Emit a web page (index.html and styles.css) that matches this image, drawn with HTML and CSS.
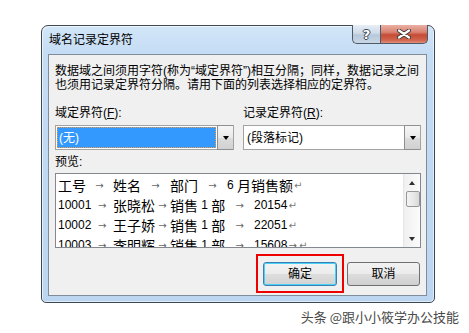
FILE: index.html
```html
<!DOCTYPE html>
<html lang="zh-CN">
<head>
<meta charset="utf-8">
<title>域名记录定界符</title>
<link rel="stylesheet" href="styles.css">
</head>
<body>
<div class="stage">
  <div class="window">
    <div class="titlebar">
      <span class="title">域名记录定界符</span>
      <div class="caption">
        <span class="cbtn help">?</span>
        <span class="cbtn close"><svg width="16" height="10" viewBox="0 0 16 10"><path d="M3 1.5 L13 8.5 M13 1.5 L3 8.5" stroke="#3a3a3a" stroke-width="4" stroke-linecap="round"/><path d="M3 1.5 L13 8.5 M13 1.5 L3 8.5" stroke="#fff" stroke-width="2.2" stroke-linecap="round"/></svg></span>
      </div>
    </div>
    <div class="client">
      <p class="desc">数据域之间须用字符(称为“域定界符”)相互分隔；同样，数据记录之间<br>也须用记录定界符分隔。请用下面的列表选择相应的定界符。</p>
      <div class="fields">
        <div class="field f1">
          <div class="label">域定界符(<u>F</u>):</div>
          <div class="combo"><span class="value sel">(无)</span><span class="drop"></span></div>
        </div>
        <div class="field f2">
          <div class="label">记录定界符(<u>R</u>):</div>
          <div class="combo"><span class="value">(段落标记)</span><span class="drop"></span></div>
        </div>
      </div>
      <div class="label plabel">预览:</div>
      <div class="listbox">
        <div class="lines">
          <div class="line"><span class="c w55">工号<i>→</i></span><span class="c w57">姓名<i>→</i></span><span class="c w57">部门<i>→</i></span><span class="n">6 </span>月销售额<b>↵</b></div>
          <div class="line"><span class="c w55"><span class="n">10001</span><i>→</i></span><span class="c w57">张晓松<i>→</i></span><span class="c w84">销售<span class="n"> 1 </span>部<i>→</i></span><span class="n">20154</span><b>↵</b></div>
          <div class="line"><span class="c w55"><span class="n">10002</span><i>→</i></span><span class="c w57">王子娇<i>→</i></span><span class="c w84">销售<span class="n"> 1 </span>部<i>→</i></span><span class="n">22051</span><b>↵</b></div>
          <div class="line"><span class="c w55"><span class="n">10003</span><i>→</i></span><span class="c w57">李明辉<i>→</i></span><span class="c w84">销售<span class="n"> 1 </span>部<i>→</i></span><span class="c w28"><span class="n">15608</span><i>→</i></span><b>↵</b></div>
        </div>
        <div class="scrollbar">
          <span class="arrow up"></span>
          <span class="thumb"></span>
          <span class="track"></span>
          <span class="arrow down"></span>
        </div>
      </div>
      <div class="buttons">
        <div class="btn default">确定<span class="mark"></span></div>
        <div class="btn cancel">取消</div>
      </div>
    </div>
  </div>
  <div class="watermark">头条 @跟小小筱学办公技能</div>
</div>
</body>
</html>
```
FILE: styles.css
```css
html, body {
  margin: 0;
  background: #fff;
}
body {
  font-family: "Liberation Sans", "Noto Sans CJK SC", sans-serif;
  font-size: 12px;
  color: #000;
}
.stage {
  width: 469px;
  height: 333px;
  box-sizing: border-box;
  padding: 25px 0 0 41px;
}
.window {
  width: 394px;
  height: 278px;
  box-sizing: border-box;
  border: 1px solid #3e4853;
  border-radius: 7px 7px 5px 5px;
  background: linear-gradient(180deg, #d3e6f8 0, #c4dcf4 28px, #bcd6f1 100%);
  box-shadow: inset 1px 1px 0 rgba(255,255,255,0.6), inset -1px -1px 0 rgba(255,255,255,0.5);
  padding: 0 7px 6px 6px;
  display: flex;
  flex-direction: column;
}
.titlebar {
  height: 28px;
  display: flex;
  align-items: center;
  flex: none;
}
.title {
  margin-left: 1px;
  line-height: 14px;
}
.caption {
  margin-left: auto;
  align-self: flex-start;
  margin-top: -1px;
  margin-right: -1px;
  display: flex;
}
.cbtn {
  height: 19px;
  box-sizing: border-box;
  border: 1px solid #4d5a68;
  border-top: none;
  display: flex;
  align-items: center;
  justify-content: center;
}
.help {
  width: 28px;
  border-right: none;
  border-radius: 0 0 0 5px;
  background: linear-gradient(180deg, #e7eef6 0, #cfdbe8 45%, #b7c8da 55%, #c9d7e5 100%);
  color: #fff;
  font-family: "DejaVu Sans", sans-serif;
  font-weight: bold;
  font-size: 13px;
  line-height: 13px;
  text-shadow: 1px 0 0 #3a4654, -1px 0 0 #3a4654, 0 1px 0 #3a4654, 0 -1px 0 #3a4654;
}
.close {
  width: 48px;
  border-radius: 0 0 5px 0;
  background: linear-gradient(180deg, #eab0a4 0, #d98271 40%, #c54a35 55%, #d0664f 85%, #e2907c 100%);
}
.close svg { display: block; }
.client {
  height: 242px;
  box-sizing: border-box;
  border: 1px solid #7f8c99;
  background: #f0f0f0;
  padding: 9px 5px 0 6px;
  flex: none;
}
.desc {
  margin: 0;
  line-height: 14px;
  white-space: nowrap;
}
.fields {
  display: flex;
  gap: 9px;
  margin-top: 14px;
}
.f1 { width: 179px; }
.f2 { width: 178px; }
.label {
  line-height: 14px;
  white-space: nowrap;
}
.label u { text-decoration: underline; }
.combo {
  margin-top: 5px;
  height: 25px;
  box-sizing: border-box;
  border: 1px solid #a3a3a3;
  background: #fff;
  display: flex;
  padding: 1px 0 1px 1px;
}
.value {
  flex: 1;
  display: flex;
  align-items: center;
  padding-left: 2px;
  line-height: 14px;
}
.value.sel {
  background: #3399ff;
  color: #fff;
  outline: 1px dotted #f29a3c;
  outline-offset: -1px;
  margin-right: 1px;
}
.drop {
  width: 16px;
  flex: none;
  box-sizing: border-box;
  border: 1px solid #8f8f8f;
  border-right: none;
  margin: -2px 0 -2px 0;
  background: linear-gradient(180deg, #f6f6f6 0, #e9e9e9 50%, #dcdcdc 51%, #d1d1d1 100%);
  display: flex;
  align-items: center;
  justify-content: center;
}
.drop::after {
  content: "";
  border-left: 3.5px solid transparent;
  border-right: 3.5px solid transparent;
  border-top: 4px solid #000;
  margin-top: 1px;
}
.plabel {
  margin-top: 5px;
}
.listbox {
  margin-top: 4px;
  height: 75px;
  box-sizing: border-box;
  border: 1px solid #828790;
  background: #fff;
  display: flex;
  overflow: hidden;
}
.lines {
  flex: 1;
  padding: 1px 0 0 2px;
  overflow: hidden;
  font-size: 14px;
}
.line {
  height: 20px;
  display: flex;
  align-items: center;
  white-space: nowrap;
}
.c {
  display: flex;
  align-items: center;
  flex: none;
}
.w55 { width: 55px; }
.w57 { width: 57px; }
.w84 { width: 84px; }
.w28 { width: 44px; }
.n {
  font-family: "Liberation Sans", sans-serif;
  font-size: 12px;
  white-space: pre;
}
.c i {
  flex: 1;
  font-style: normal;
  text-align: center;
  font-family: "DejaVu Sans", sans-serif;
  font-size: 10px;
  color: #666;
}
.line b {
  font-weight: normal;
  font-family: "DejaVu Sans", sans-serif;
  font-size: 10px;
  color: #7a7a7a;
  margin-left: 1px;
}
.scrollbar {
  width: 16px;
  flex: none;
  border-left: 1px solid #e6e6e6;
  background: linear-gradient(90deg, #f0f0f0, #fbfbfb);
  display: flex;
  flex-direction: column;
  align-items: center;
}
.arrow {
  height: 17px;
  flex: none;
  display: flex;
  align-items: center;
}
.arrow.up::after {
  content: "";
  border-left: 3.5px solid transparent;
  border-right: 3.5px solid transparent;
  border-bottom: 4px solid #303030;
}
.arrow.down::after {
  content: "";
  border-left: 3.5px solid transparent;
  border-right: 3.5px solid transparent;
  border-top: 4px solid #303030;
}
.thumb {
  width: 14px;
  height: 16px;
  flex: none;
  box-sizing: border-box;
  margin-left: 1px;
  border: 1px solid #979797;
  border-radius: 2px;
  background: linear-gradient(90deg, #f3f3f3 0, #e9e9e9 50%, #d9d9d9 100%);
}
.track { flex: 1; }
.buttons {
  margin-top: 14px;
  display: flex;
  justify-content: flex-end;
  gap: 10px;
  padding-right: 1px;
}
.btn {
  position: relative;
  width: 74px;
  height: 24px;
  box-sizing: border-box;
  border: 1px solid #707070;
  border-radius: 3px;
  background: linear-gradient(180deg, #f2f2f2 0, #ebebeb 50%, #dddddd 51%, #cfcfcf 100%);
  display: flex;
  align-items: center;
  justify-content: center;
  line-height: 14px;
}
.btn.cancel { width: 73px; }
.btn.default {
  border-color: #3c7fb1;
  box-shadow: inset 0 0 0 1px #48d1f8;
  background: linear-gradient(180deg, #f3f3f3 0, #ececec 50%, #dedede 51%, #d2d2d2 100%);
}
.mark {
  position: absolute;
  left: -8px;
  right: -8px;
  top: -9px;
  bottom: -8px;
  border: 2px solid #ee0000;
}
.watermark {
  margin-top: 5px;
  width: 418px;
  text-align: right;
  font-family: "Noto Sans CJK SC", sans-serif;
  font-size: 13px;
  line-height: 18px;
  color: #4a4a4a;
  text-shadow: 0 0 2px #fff;
}
```
